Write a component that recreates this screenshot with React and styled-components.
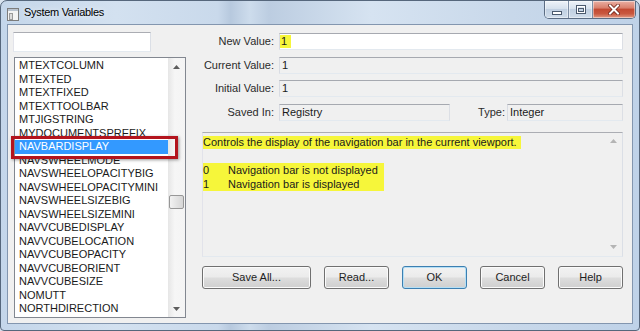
import React from "react";
import styled, { createGlobalStyle } from "styled-components";

const GlobalStyle = createGlobalStyle`
  html, body { margin: 0; padding: 0; background: #d9e4f0; }
  body { font-family: "Liberation Sans", Arial, sans-serif; }
  * { box-sizing: border-box; }
`;

const variables = [
  "MTEXTCOLUMN", "MTEXTED", "MTEXTFIXED", "MTEXTTOOLBAR", "MTJIGSTRING",
  "MYDOCUMENTSPREFIX", "NAVBARDISPLAY", "NAVSWHEELMODE", "NAVSWHEELOPACITYBIG",
  "NAVSWHEELOPACITYMINI", "NAVSWHEELSIZEBIG", "NAVSWHEELSIZEMINI", "NAVVCUBEDISPLAY",
  "NAVVCUBELOCATION", "NAVVCUBEOPACITY", "NAVVCUBEORIENT", "NAVVCUBESIZE",
  "NOMUTT", "NORTHDIRECTION",
];

const Window = styled.div`
  position: relative;
  width: 640px;
  height: 331px;
  display: flex;
  flex-direction: column;
  padding: 0 6px 6px 6px;
  border: 1px solid #56677c;
  border-radius: 7px 7px 4px 4px;
  background: linear-gradient(90deg, #c4d6ea 0%, #d3e1f0 18%, #c9d9eb 34%, #b7c9de 36%, #cddcec 39%, #bccde1 42%, #d6e3f1 58%, #c8d8ea 80%, #bfd2e8 100%);
`;

const TitleBar = styled.div`
  height: 23px;
  display: flex;
  align-items: flex-start;
`;

const AppIcon = styled.svg`
  margin-top: 7px;
  flex: none;
`;

const Title = styled.span`
  margin-left: 5px;
  margin-top: 5px;
  font-size: 11px;
  letter-spacing: -0.3px;
  color: #000;
  text-shadow: 0 0 6px rgba(255, 255, 255, 0.9);
`;

const Caption = styled.div`
  margin-left: auto;
  margin-right: -3px;
  display: flex;
  border: 1px solid #5b6c83;
  border-top: none;
  border-radius: 0 0 5px 5px;
  overflow: hidden;
  height: 18px;
`;

const CaptionButton = styled.div`
  width: ${(p) => p.$w}px;
  height: 100%;
  display: flex;
  align-items: center;
  justify-content: center;
  border-left: ${(p) => (p.$first ? "none" : "1px solid #7d8ea5")};
  background: ${(p) =>
    p.$close
      ? "linear-gradient(#eab0a4 0%, #d9806d 40%, #c34a33 50%, #c9583f 75%, #e29a84 100%)"
      : "linear-gradient(#eef3f9 0%, #d6e1ed 45%, #c1d0e2 50%, #cfdcea 100%)"};
  box-shadow: inset 0 0 0 1px rgba(255, 255, 255, 0.45);
`;

const Client = styled.div`
  flex: 1;
  display: flex;
  background: #f0f0f0;
  border: 1px solid #8396af;
  padding: 7px 9px 0 5px;
`;

const LeftCol = styled.div`
  width: 173px;
  display: flex;
  flex-direction: column;
  gap: 5px;
`;

const SearchBox = styled.div`
  width: 138px;
  height: 20px;
  background: #fff;
  border: 1px solid;
  border-color: #abadb3 #dbdfe6 #e3e9ef #e2e3ea;
`;

const ListBox = styled.div`
  margin-left: 1px;
  width: 172px;
  height: 261px;
  display: flex;
  background: #fff;
  border: 1px solid #828790;
`;

const Items = styled.div`
  flex: 1;
  padding-top: 1px;
  overflow: hidden;
`;

const Item = styled.div`
  height: 13.5px;
  line-height: 13.5px;
  font-size: 11px;
  padding-left: 4px;
  white-space: nowrap;
  color: ${(p) => (p.$selected ? "#fff" : "#1a1a1a")};
  background: ${(p) => (p.$selected ? "#3399ff" : "transparent")};
`;

const ScrollBar = styled.div`
  width: 17px;
  display: flex;
  flex-direction: column;
  background: linear-gradient(90deg, #e6e6e6, #f6f6f6 40%, #f4f4f4);
`;

const ScrollArrow = styled.div`
  height: 17px;
  display: flex;
  align-items: center;
  justify-content: center;
`;

const ScrollTrack = styled.div`
  flex: 1;
`;

const Thumb = styled.div`
  margin: ${(p) => p.$offset}px auto 0;
  width: 15px;
  height: 14px;
  border: 1px solid #979797;
  border-radius: 2px;
  background: linear-gradient(90deg, #f2f2f2, #e3e3e3 50%, #d6d6d6);
`;

const RightCol = styled.div`
  flex: 1;
  margin-left: 16px;
  padding-top: 1px;
  display: flex;
  flex-direction: column;
`;

const Fields = styled.div`
  display: grid;
  grid-template-columns: 72px 1fr;
  column-gap: 5px;
  row-gap: 6.5px;
`;

const Label = styled.div`
  text-align: right;
  font-size: 11px;
  line-height: 17px;
  color: #2b2b2b;
  white-space: nowrap;
`;

const TextBox = styled.div`
  height: 17px;
  width: ${(p) => (p.$w ? `${p.$w}px` : "auto")};
  flex: none;
  font-size: 11px;
  line-height: 15px;
  padding-left: ${(p) => (p.$pad ? "2px" : "0")};
  color: #1a1a1a;
  background: ${(p) => (p.$editable ? "#fff" : "#f0f0f0")};
  border: 1px solid;
  border-color: #a6a9b0 #dcdfe5 #e3e9ef #d9dce3;
  white-space: nowrap;
  overflow: hidden;
`;

const Marked = styled.span`
  display: inline-block;
  background: #f6f63a;
  line-height: 13px;
  padding: 0 4px 0 ${(p) => p.$lead || 0}px;
`;

const SavedRow = styled.div`
  display: flex;
  align-items: center;
`;

const TypeLabel = styled.div`
  flex: 1;
  text-align: right;
  padding-right: 2px;
  font-size: 11px;
  color: #2b2b2b;
`;

const DescBox = styled.div`
  margin-top: 11px;
  height: 125px;
  display: flex;
  background: #f0f0f0;
  border: 1px solid;
  border-color: #abadb3 #dbdfe6 #e3e9ef #e2e3ea;
`;

const DescText = styled.div`
  flex: 1;
  padding-top: 2px;
  font-size: 11px;
  line-height: 14px;
  color: #1a1a1a;
`;

const Gap = styled.div`
  height: 14px;
`;

const ValueTable = styled.div`
  display: inline-grid;
  grid-template-columns: 25px auto;
  background: #f6f63a;
  padding-right: 6px;
`;

const DescScroll = styled.div`
  width: 17px;
  display: flex;
  flex-direction: column;
  justify-content: space-between;
`;

const Buttons = styled.div`
  margin-top: 9px;
  display: flex;
  justify-content: space-between;
`;

const Button = styled.div`
  width: ${(p) => p.$w}px;
  height: 23px;
  display: flex;
  align-items: center;
  justify-content: center;
  font-size: 11px;
  color: #1e1e1e;
  border: 1px solid ${(p) => (p.$default ? "#3c7fb1" : "#707070")};
  border-radius: 3px;
  background: linear-gradient(#f2f2f2 0%, #ebebeb 48%, #dddddd 52%, #cfcfcf 100%);
  box-shadow: inset 0 0 0 1px ${(p) => (p.$default ? "#b5dff5" : "#fbfbfb")};
`;

const Callout = styled.div`
  position: absolute;
  left: 10px;
  top: 135px;
  width: 167px;
  height: 23px;
  border: 3px solid #b3141d;
  box-shadow: 1px 1px 3px rgba(0, 0, 0, 0.4);
`;

function Arrow({ down, color = "#5d5d5d" }) {
  return (
    <svg width="7" height="4" viewBox="0 0 7 4">
      <path d={down ? "M0 0 H7 L3.5 4 Z" : "M0 4 H7 L3.5 0 Z"} fill={color} />
    </svg>
  );
}

export default function App() {
  return (
    <>
      <GlobalStyle />
      <Window>
        <TitleBar>
          <AppIcon width="12" height="13" viewBox="0 0 12 13">
            <rect x="0.5" y="0.5" width="11" height="12" fill="#f4f4f4" stroke="#7c7c7c" />
            <rect x="1" y="1" width="10" height="2" fill="#b9c3cf" />
            <rect x="2.5" y="5.5" width="3" height="6" fill="#dcdcdc" stroke="#9a9a9a" />
          </AppIcon>
          <Title>System Variables</Title>
          <Caption>
            <CaptionButton $w={23} $first>
              <svg width="10" height="10" viewBox="0 0 10 10">
                <rect x="0.5" y="6.5" width="9" height="3" fill="#fff" stroke="#4b5a6e" />
              </svg>
            </CaptionButton>
            <CaptionButton $w={24}>
              <svg width="10" height="9" viewBox="0 0 10 9">
                <rect x="0.5" y="0.5" width="9" height="8" fill="none" stroke="#4b5a6e" />
                <rect x="1.5" y="1.5" width="7" height="6" fill="none" stroke="#fff" />
                <rect x="2.5" y="3.5" width="5" height="3" fill="none" stroke="#4b5a6e" />
              </svg>
            </CaptionButton>
            <CaptionButton $w={43} $close>
              <svg width="12" height="11" viewBox="0 0 12 11">
                <path d="M2 1.5 L10 9.5 M10 1.5 L2 9.5" stroke="#6a2016" strokeWidth="3.6" strokeLinecap="square" />
                <path d="M2 1.5 L10 9.5 M10 1.5 L2 9.5" stroke="#fff" strokeWidth="2" strokeLinecap="square" />
              </svg>
            </CaptionButton>
          </Caption>
        </TitleBar>

        <Client>
          <LeftCol>
            <SearchBox />
            <ListBox>
              <Items>
                {variables.map((v) => (
                  <Item key={v} $selected={v === "NAVBARDISPLAY"}>{v}</Item>
                ))}
              </Items>
              <ScrollBar>
                <ScrollArrow><Arrow /></ScrollArrow>
                <ScrollTrack><Thumb $offset={120} /></ScrollTrack>
                <ScrollArrow><Arrow down /></ScrollArrow>
              </ScrollBar>
            </ListBox>
          </LeftCol>

          <RightCol>
            <Fields>
              <Label>New Value:</Label>
              <TextBox $editable><Marked $lead={1}>1</Marked></TextBox>
              <Label>Current Value:</Label>
              <TextBox $pad>1</TextBox>
              <Label>Initial Value:</Label>
              <TextBox $pad>1</TextBox>
              <Label>Saved In:</Label>
              <SavedRow>
                <TextBox $w={171} $pad>Registry</TextBox>
                <TypeLabel>Type:</TypeLabel>
                <TextBox $w={116} $pad>Integer</TextBox>
              </SavedRow>
            </Fields>

            <DescBox>
              <DescText>
                <Marked>Controls the display of the navigation bar in the current viewport.</Marked>
                <Gap />
                <ValueTable>
                  <span>0</span><span>Navigation bar is not displayed</span>
                  <span>1</span><span>Navigation bar is displayed</span>
                </ValueTable>
              </DescText>
              <DescScroll>
                <ScrollArrow><Arrow color="#b4b4b4" /></ScrollArrow>
                <ScrollArrow><Arrow down color="#b4b4b4" /></ScrollArrow>
              </DescScroll>
            </DescBox>

            <Buttons>
              <Button $w={109}>Save All...</Button>
              <Button $w={65}>Read...</Button>
              <Button $w={65} $default>OK</Button>
              <Button $w={65}>Cancel</Button>
              <Button $w={65}>Help</Button>
            </Buttons>
          </RightCol>
        </Client>

        <Callout />
      </Window>
    </>
  );
}
